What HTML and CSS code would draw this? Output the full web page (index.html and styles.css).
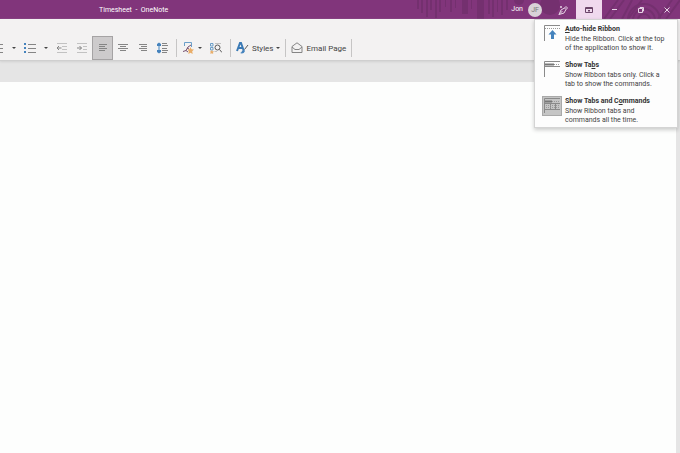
FILE: index.html
```html
<!DOCTYPE html>
<html lang="en">
<head>
<meta charset="utf-8">
<title>Timesheet - OneNote</title>
<link rel="stylesheet" href="styles.css">
</head>
<body>
<header class="titlebar">
  <svg class="art" width="264" height="19" viewBox="0 0 264 19" aria-hidden="true">
    <g fill="#74306f">
      <path d="M1 0h2v9H1zM5 0h2v13H5zM10 0h2v17h-2zM14 0h2v10h-2zM19 0h2v18h-2zM23 0h2v12h-2zM29 0h1v7h-1zM34 0h2v12h-2zM39 0h1v8h-1zM46 0h6v14h-6zM55 0h1v9h-1zM61 0h7v19h-7zM72 0h2v14h-2zM76 0h2v17h-2zM81 0h1v12h-1zM85 0h2v15h-2zM90 0h2v10h-2z"/>
      <circle cx="103" cy="0" r="5"/><circle cx="134" cy="5" r="10"/>
    </g>
    <g fill="none" stroke="#74306f" stroke-width="2">
      <path d="M188 19l14-19M194 19l14-19M216 0l-10 19M226 0l-14 19M250 19l14-19M242 19l14-19"/>
      <circle cx="228" cy="20" r="6"/><circle cx="228" cy="20" r="11"/><circle cx="228" cy="20" r="16"/>
    </g>
  </svg>
  <h1 class="doc-title">Timesheet&nbsp; -&nbsp; OneNote</h1>
  <div class="account">Jon <span class="avatar">JF</span></div>
  <button class="win pen" aria-label="Ink"><svg width="12" height="12" viewBox="0 0 12 12"><path d="M2 10.500L4 6l3.500-2L9 5.500 7 9l-5 1.500zM2 10.500L5.500 7M7.500 4L9 2.500 10.500 4 9 5.500M4 2v2M3 3h2"/></svg></button>
  <button class="win display" aria-label="Ribbon display options" aria-expanded="true"><svg width="10" height="8" viewBox="0 0 10 8"><path d="M1.500 1.500h7v5h-7zM1.500 2.500h7M5 6.500V4M4 5l1-1 1 1"/></svg></button>
  <button class="win" aria-label="Minimize"><svg width="8" height="8" viewBox="0 0 8 8"><path d="M1 3.500h5"/></svg></button>
  <button class="win" aria-label="Restore"><svg width="8" height="8" viewBox="0 0 8 8"><path d="M1.500 2.500h4v4h-4zM3 2.500v-1h3.500V5H5.500"/></svg></button>
  <button class="win" aria-label="Close"><svg width="8" height="8" viewBox="0 0 8 8"><path d="M1.500 1.500l5 5M6.500 1.500l-5 5"/></svg></button>
</header>

<nav class="ribbon" aria-label="Formatting">
  <button class="tool cut" aria-label="Numbering"><svg width="8" height="12" viewBox="0 0 8 12"><path class="ln" d="M0 2.500h3M0 6.500h3M0 10.500h3"/></svg></button>
  <button class="drop" aria-label="Numbering options"><svg width="4" height="2" viewBox="0 0 4 2"><path class="tri" d="M0 0h4L2 2z"/></svg></button>
  <button class="tool" aria-label="Bullets"><svg width="12" height="12" viewBox="0 0 12 12"><path class="ln" d="M4 2.500h8M4 6.500h8M4 10.500h8"/><path class="blue" d="M0 1h2v2H0zM0 5h2v2H0zM0 9h2v2H0z"/></svg></button>
  <button class="drop" aria-label="Bullet options"><svg width="4" height="2" viewBox="0 0 4 2"><path class="tri" d="M0 0h4L2 2z"/></svg></button>
  <button class="tool" aria-label="Decrease indent"><svg width="12" height="12" viewBox="0 0 12 12"><path class="pale" d="M1 1.500h10M6 4.500h5M6 7.500h5M1 10.500h10"/><path class="ln" d="M1 6h4.500M3 4L1 6l2 2"/></svg></button>
  <button class="tool" aria-label="Increase indent"><svg width="12" height="12" viewBox="0 0 12 12"><path class="pale" d="M1 1.500h10M7 4.500h4M7 7.500h4M1 10.500h10"/><path class="ln" d="M1 6h4.500M3.500 4l2 2-2 2"/></svg></button>
  <button class="tool active" aria-label="Align left" aria-pressed="true"><svg width="10" height="10" viewBox="0 0 10 10"><path class="ln" d="M1 1.500h8M1 3.500h6M1 5.500h8M1 7.500h6"/></svg></button>
  <button class="tool" aria-label="Center"><svg width="10" height="10" viewBox="0 0 10 10"><path class="ln" d="M0 1.500h10M2 3.500h6M0 5.500h10M2 7.500h6"/></svg></button>
  <button class="tool" aria-label="Align right"><svg width="10" height="10" viewBox="0 0 10 10"><path class="ln" d="M1 1.500h8M3 3.500h6M1 5.500h8M3 7.500h6"/></svg></button>
  <button class="tool" aria-label="Paragraph spacing"><svg width="12" height="12" viewBox="0 0 12 12"><path class="ln" d="M5 1.500h5M5 3.500h6M5 6.500h5M5 8.500h6M5 10.500h5"/><path class="blue" d="M2 .5L4 2v2H2.500v4H4v2l-2 1.500L0 10V8h1.500V4H0V2z"/></svg></button>
  <span class="sep"></span>
  <button class="tool narrow" aria-label="Tag"><svg width="12" height="12" viewBox="0 0 12 12"><path class="blue-ln" d="M2.500 4V.5h7V5"/><path class="plum" d="M1 9.500l3-1 2-3.500 3-2M4 8.500L6 10M5 6l2 1"/><path class="star" d="M8.500 5l1 2.200 2.500.3-1.800 1.700.5 2.800-2.200-1.300L6.300 12l.5-2.800L5.500 7.500l2-.3z"/></svg></button>
  <button class="drop slim" aria-label="Tag options"><svg width="4" height="2" viewBox="0 0 4 2"><path class="tri" d="M0 0h4L2 2z"/></svg></button>
  <button class="tool find" aria-label="Find tags"><svg width="12" height="12" viewBox="0 0 12 12"><path class="blue-ln" d="M.5 1.500h2.500v2.500H.5zM.5 5.500H3V8H.5z"/><path class="star" d="M1.800 8l.7 1.300L4 9.500l-1 1 .2 1.500-1.400-.7-1.400.7.2-1.500-.6-1 1.100-.2z"/><path class="pale" d="M5 1.500h6M4.500 9.500H7"/><circle class="dark" cx="7.500" cy="5.500" r="2.500"/><path class="dark" d="M9.500 7.500L12 10.500"/></svg></button>
  <span class="sep"></span>
  <button class="labeled"><svg width="13" height="12" viewBox="0 0 13 12"><path class="letter" d="M1 9l3-8h1l2.500 7M2.500 6h4"/><path class="dark" d="M12 3L8.500 7.500"/><path class="blue" d="M4 11c2 0 1.500-3 4-3.500L9 9c-1 2.500-3 3-5 2z"/></svg><span>Styles</span><svg width="4" height="2" viewBox="0 0 4 2"><path class="tri" d="M0 0h4L2 2z"/></svg></button>
  <span class="sep"></span>
  <button class="labeled"><svg width="12" height="12" viewBox="0 0 12 12"><path class="ln" d="M1 4.500L6 .8l5 3.700v6H1zM1 5l3 2.500h4L11 5"/></svg><span>Email Page</span></button>
  <span class="sep"></span>
</nav>

<main class="workspace"><div class="page"></div></main>

<div class="menu" role="menu">
  <button class="item" role="menuitem">
    <svg width="20" height="20" viewBox="0 0 20 20"><path class="frame" d="M2.500 17V1.500H18"/><path class="dots" d="M3 4.500h15"/><path class="blue" d="M10.500 6l4 4.500H12V15H9v-4.500H6.500z"/></svg>
    <span><strong><u>A</u>uto-hide Ribbon</strong>Hide the Ribbon. Click at the top<br>of the application to show it.</span>
  </button>
  <button class="item" role="menuitem">
    <svg width="20" height="20" viewBox="0 0 20 20"><path class="frame" d="M2.500 17V1.500H18M3 6.500h15"/><path class="thick" d="M3 4.500h9"/><path class="dots" d="M12 4.500h6"/></svg>
    <span><strong>Show Ta<u>b</u>s</strong>Show Ribbon tabs only. Click a<br>tab to show the commands.</span>
  </button>
  <button class="item chosen" role="menuitem">
    <svg width="20" height="20" viewBox="0 0 20 20"><path class="frame" d="M2.500 17V2.500H18M3 7.500h15M3 13.500h15M8.500 8v5M13.500 8v5"/><path class="thick" d="M3 5.500h7"/><path class="dots" d="M10 5.500h8M4 9.500h13M4 11.500h13"/></svg>
    <span><strong>Show Tabs and C<u>o</u>mmands</strong>Show Ribbon tabs and<br>commands all the time.</span>
  </button>
</div>
</body>
</html>
```

FILE: styles.css
```css
* { box-sizing: border-box; }

body {
  margin: 0;
  min-height: 100vh;
  display: flex;
  flex-direction: column;
  position: relative;
  overflow: hidden;
  background: #fdfefd;
  font: 7px/9px Roboto, "Open Sans", sans-serif;
  color: #444;
}

button {
  margin: 0;
  padding: 0;
  border: 0;
  background: none;
  font: inherit;
  color: inherit;
}

svg { display: block; flex: none; fill: none; }

.titlebar {
  position: relative;
  display: flex;
  align-items: stretch;
  height: 19px;
  background: #81357b;
  color: #fff;
}

.art { position: absolute; top: 0; right: 0; }

.doc-title {
  flex: 1;
  margin: 0;
  padding-left: 99px;
  font-size: 7px;
  font-weight: 400;
  line-height: 20px;
}

.account {
  position: relative;
  display: flex;
  align-items: center;
  gap: 5px;
  padding-right: 8px;
}

.avatar {
  width: 14px;
  height: 14px;
  border-radius: 50%;
  background: #d9d3d8;
  color: #777;
  line-height: 14px;
  text-align: center;
}

.win {
  position: relative;
  width: 26px;
  display: flex;
  align-items: center;
  justify-content: center;
}

.win svg { stroke: #e6d3e5; }
.win.display { background: #f0d9ee; }
.win.display svg { stroke: #6b4469; }

.ribbon {
  display: flex;
  align-items: flex-end;
  height: 42px;
  background: #f3f2f2;
  border-bottom: 1px solid #cfcfcf;
  box-shadow: 0 1px 2px #d0d0d0;
  position: relative;
}

.tool, .drop, .labeled {
  height: 24px;
  display: flex;
  align-items: center;
  justify-content: center;
}

.tool { width: 20px; }
.cut { width: 8px; }
.drop { width: 12px; }
.narrow { width: 16px; }
.slim { width: 8px; }
.find { width: 23px; }

.active { width: 21px; background: #cdcbcc; border: 1px solid #a5a3a4; }

.labeled { gap: 3px; padding: 0 2px; font-size: 8px; }

.sep {
  width: 1px;
  height: 18px;
  margin: 0 3px 3px;
  background: #c6c5c5;
}

.ln { stroke: #858585; }
.pale { stroke: #c2c2c2; }
.dark { stroke: #5a5a5a; }
.tri { fill: #444; }
.blue { fill: #4583bd; }
.blue-ln { stroke: #6b9fc9; }
.plum { stroke: #76506f; }
.star { fill: #e9ad68; }
.letter { stroke: #3b7ab5; stroke-width: 2; }

.workspace {
  flex: 1;
  display: flex;
  padding: 21px 4px 0 0;
  background: #e5e5e5;
}

.page { flex: 1; background: #fdfefd; }

.menu {
  position: absolute;
  top: 19px;
  right: 2px;
  width: 144px;
  padding: 4px 7px 2px;
  display: flex;
  flex-direction: column;
  gap: 7px;
  background: #fdfdfd;
  border: 1px solid #d4d4d4;
  box-shadow: 0 2px 4px rgba(0, 0, 0, .2);
}

.item {
  display: flex;
  gap: 3px;
  text-align: left;
  white-space: nowrap;
}

.item strong { display: block; line-height: 11px; color: #333; }
.item u { text-underline-offset: 1px; }
.chosen svg { background: #c5c5c5; outline: 1px solid #a9a9a9; outline-offset: -1px; }

.frame { stroke: #8a8a8a; }
.dots { stroke: #999; stroke-dasharray: 1 1; }
.thick { stroke: #777; stroke-width: 2; }
```
